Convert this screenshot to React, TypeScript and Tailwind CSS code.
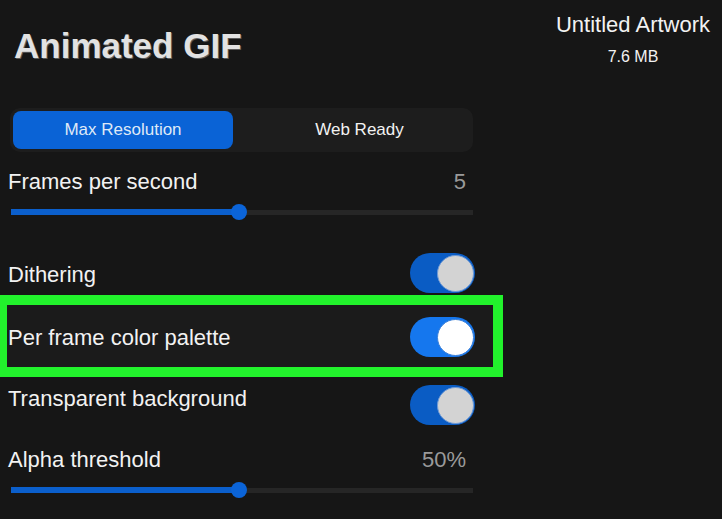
import { useState } from "react";

type ToggleProps = { on?: boolean; bright?: boolean };

function Toggle({ bright }: ToggleProps) {
  return (
    <div
      className={
        bright
          ? "w-[65px] h-[40px] rounded-full bg-[#1577ee] flex items-center justify-end pr-[1px] shrink-0"
          : "w-[65px] h-[40px] rounded-full bg-[#0a5cc4] flex items-center justify-end pr-[1px] shrink-0"
      }
    >
      <div
        className={
          bright
            ? "w-[37px] h-[37px] rounded-full bg-white border border-[#3a7fd8]"
            : "w-[37px] h-[37px] rounded-full bg-[#d3d3d3] border border-[#6f9ad6]"
        }
      />
    </div>
  );
}

function Slider({ value }: { value: number }) {
  return (
    <div className="ml-[11px] mr-[2px] h-[16px] relative flex items-center">
      <div className="h-[5px] w-full bg-[#262626]" />
      <div
        className="absolute left-0 h-[6px] bg-[#0b5fcc]"
        style={{ width: `${value}%` }}
      />
      <div
        className="absolute w-[16px] h-[16px] rounded-full bg-[#0b64d8] -ml-[8px]"
        style={{ left: `${value}%` }}
      />
    </div>
  );
}

export default function App() {
  const [mode, setMode] = useState("max");

  return (
    <div
      className="w-[722px] h-[519px] bg-[#161616] flex overflow-hidden text-[#f2f2f2]"
      style={{ fontFamily: '"Liberation Sans", Arial, sans-serif' }}
    >
      <div className="w-[475px] shrink-0 flex flex-col">
        <h1 className="mt-[28px] ml-[14px] text-[35px] leading-none font-bold text-[#e2e2e2] [text-shadow:1px_1px_0_#5a5a5a]">
          Animated GIF
        </h1>

        <div className="mt-[45px] ml-[10px] mr-[2px] h-[44px] rounded-[10px] bg-[#1d1d1d] p-[3px] flex">
          <button
            onClick={() => setMode("max")}
            className={
              mode === "max"
                ? "w-[220px] h-full rounded-[8px] bg-[#0a63d6] text-[17px] text-[#dfe9f7]"
                : "w-[220px] h-full rounded-[8px] text-[17px] text-[#f2f2f2]"
            }
          >
            Max Resolution
          </button>
          <button
            onClick={() => setMode("web")}
            className={
              mode === "web"
                ? "flex-1 h-full pl-[16px] rounded-[8px] bg-[#0a63d6] text-[17px] text-[#dfe9f7]"
                : "flex-1 h-full pl-[16px] rounded-[8px] text-[17px] text-[#f2f2f2]"
            }
          >
            Web Ready
          </button>
        </div>

        <div className="mt-[19px] pl-[8px] pr-[9px] flex justify-between text-[22px] leading-none">
          <span>Frames per second</span>
          <span className="text-[#9a9a9a]">5</span>
        </div>
        <div className="mt-[11px]">
          <Slider value={49.3} />
        </div>

        <div className="mt-[33px] pl-[8px] h-[40px] flex items-center justify-between text-[22px] leading-none">
          <span className="pt-[4px]">Dithering</span>
          <Toggle />
        </div>

        <div className="mt-[2px] w-[503px] border-[10px] border-l-[7px] border-[#22f22c] pt-[12px] pb-[10px] pr-[18px] flex items-center justify-between text-[22px] leading-none bg-[#1b1b1b]">
          <span className="pl-[1px] pt-[1px]">Per frame color palette</span>
          <Toggle bright />
        </div>

        <div className="mt-[8px] pl-[8px] h-[40px] flex items-start justify-between text-[22px] leading-none">
          <span className="pt-[3px]">Transparent background</span>
          <Toggle />
        </div>

        <div className="mt-[24px] pl-[8px] pr-[9px] flex justify-between text-[22px] leading-none">
          <span>Alpha threshold</span>
          <span className="text-[#9a9a9a]">50%</span>
        </div>
        <div className="mt-[11px]">
          <Slider value={49.3} />
        </div>
      </div>

      <div className="flex-1 pl-[69px] flex flex-col items-center">
        <div className="mt-[14px] text-[22px] leading-none whitespace-nowrap">
          Untitled Artwork
        </div>
        <div className="mt-[13px] text-[16px] leading-none">7.6 MB</div>
      </div>
    </div>
  );
}
